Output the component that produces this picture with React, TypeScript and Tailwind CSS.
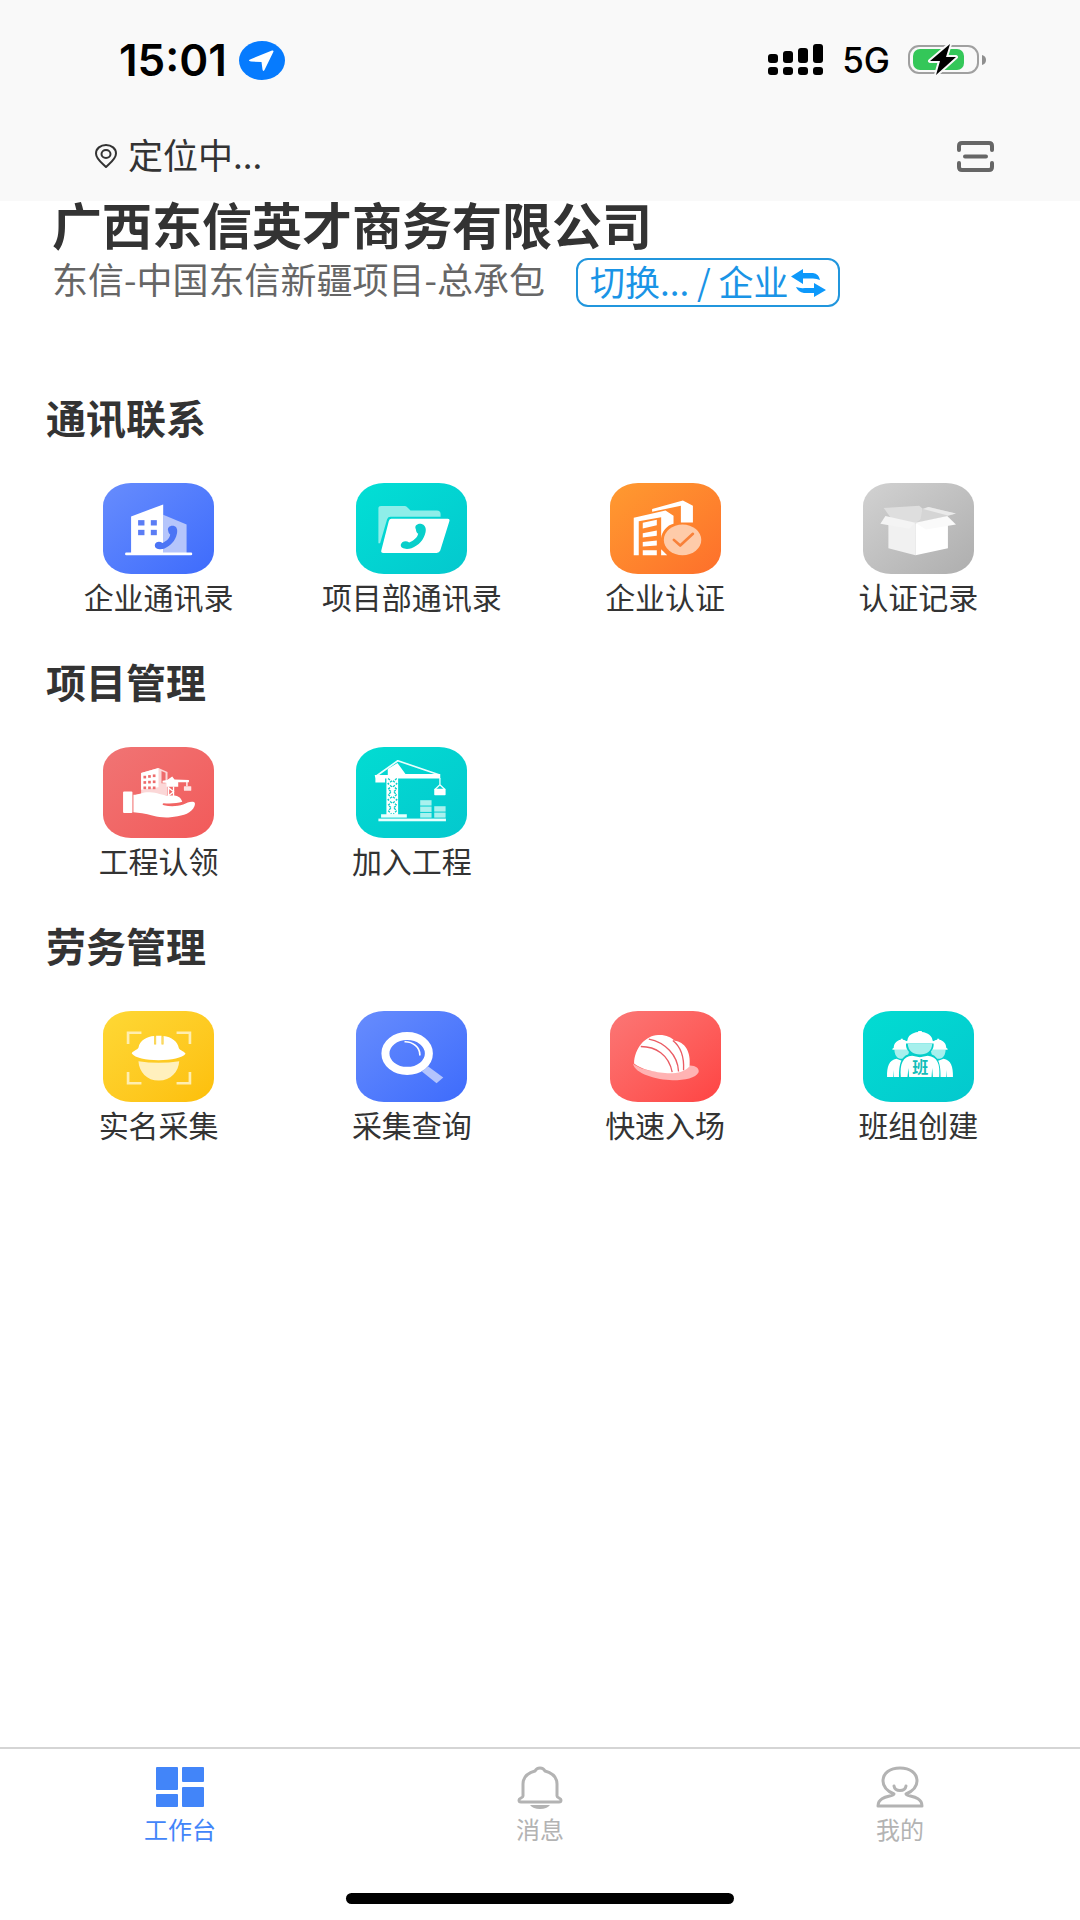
import React from 'react';

interface MenuItem {
  label: string;
  tile: string;
  icon: React.ReactNode;
}

interface MenuSection {
  title: string;
  items: MenuItem[];
}

interface TabItem {
  label: string;
  active?: boolean;
  icon: React.ReactNode;
}

const TileSvg: React.FC<{ children: React.ReactNode }> = ({ children }) => (
  <svg viewBox="0 0 332 272" preserveAspectRatio="none" className="h-full w-full" aria-hidden="true">
    {children}
  </svg>
);

const CompanyContactsIcon = () => (
  <TileSvg>
    <path d="M180 95 L250 124 V210 H180 Z" fill="#b5c5fb" />
    <path d="M84 100 L180 64 V210 H84 Z" fill="#fff" />
    <g fill="#5b7df5">
      <rect x="105" y="111" width="19" height="16" />
      <rect x="143" y="111" width="18" height="16" />
      <rect x="105" y="140" width="19" height="16" />
      <rect x="143" y="140" width="18" height="16" />
    </g>
    <rect x="66" y="208" width="201" height="8" rx="4" fill="#fff" />
    <path
      d="M195 143 C191 133 201 126 211 128 C221 130 224 141 221 152 C216 174 202 188 184 196 C170 201 154 197 155 185 C157 175 169 173 178 179 C190 174 200 165 201 154 C197 152 196 148 195 143 Z"
      fill="#4b74f5"
    />
  </TileSvg>
);

const ProjectContactsIcon = () => (
  <TileSvg>
    <path d="M67 76 Q67 69 75 69 H145 Q150 69 154 73 L163 82 H242 Q253 82 253 93 V101 H103 Q96 101 93 108 L72 180 H67 Z" fill="#8eeee9" />
    <path d="M106 107 H274 Q282 107 279 115 L252 202 Q249 209 241 209 H82 Q73 209 76 200 L98 114 Q100 107 106 107 Z" fill="#fff" />
    <path
      d="M179 138 C174 128 183 121 194 122 C206 124 211 135 208 147 C203 170 188 186 166 195 C150 200 132 196 134 184 C137 174 150 171 159 178 C172 173 184 163 186 152 C181 149 180 144 179 138 Z"
      fill="#08cfca"
    />
  </TileSvg>
);

const CertificationIcon = () => (
  <TileSvg>
    <path d="M126 78 L218 52 L248 68 V118 H212 V68 L126 86 Z" fill="#fff" />
    <path d="M71 104 L166 82 L190 98 V122 C171 126 155 145 153 165 V102 L86 114 V216 H71 Z" fill="#fff" />
    <g fill="#fff">
      <path d="M98 119 L140 110 V126 L98 136 Z" />
      <path d="M98 150 L140 142 V158 L98 163 Z" />
      <path d="M98 176 L140 172 V187 L98 190 Z" />
      <path d="M98 201 H140 V216 H98 Z" />
      <path d="M153 198 L171 216 H153 Z" />
    </g>
    <ellipse cx="217" cy="170" rx="56" ry="46" fill="#fecba9" />
    <path d="M191 170 L210 187 L248 152" fill="none" stroke="#f8813a" strokeWidth="8" strokeLinecap="round" strokeLinejoin="round" />
  </TileSvg>
);

const RecordsIcon = () => (
  <TileSvg>
    <path d="M62 75 L168 68 L178 76 V107 L157 120 L84 105 Z" fill="#dedede" />
    <path d="M178 76 L196 72 L278 91 L254 99 L157 120 L172 108 Z" fill="#d5d5d5" />
    <path d="M196 72 L278 91 L254 97 L180 78 Z" fill="#eaeaea" />
    <path d="M76 116 L157 120 V216 L76 195 Z" fill="#f1f1f1" />
    <path d="M157 120 L254 116 V195 L157 216 Z" fill="#fff" />
    <path d="M67 99 L157 119 L138 137 L52 122 Z" fill="#f4f4f4" />
    <path d="M157 119 L252 99 L278 124 L188 139 Z" fill="#fafafa" />
  </TileSvg>
);

const ClaimProjectIcon = () => (
  <TileSvg>
    <path d="M114 78 L166 63 L193 75 V145 H114 Z" fill="#fbd7d7" />
    <path d="M114 78 L166 63 V120 L114 128 Z" fill="#fff" />
    <g fill="#ee6b6b">
      <rect x="121" y="86" width="8" height="8" />
      <rect x="135" y="84" width="8" height="8" />
      <rect x="149" y="82" width="8" height="8" />
      <rect x="121" y="102" width="8" height="8" />
      <rect x="135" y="101" width="8" height="8" />
      <rect x="149" y="100" width="8" height="8" />
      <rect x="121" y="118" width="8" height="8" />
      <rect x="135" y="118" width="8" height="8" />
      <rect x="149" y="118" width="8" height="8" />
    </g>
    <path d="M175 72 L187 77 V108 H175 Z" fill="#ee6b6b" />
    <path d="M192 99 L207 88 L214 97 L257 99 V105 H225 V119 H190 V107 H178 V101 Z" fill="#fff" />
    <path d="M196 118 V152 M211 118 V152 M196 122 L211 134 L196 146 M251 104 V117" fill="none" stroke="#fff" strokeWidth="4" />
    <rect x="242" y="117" width="22" height="14" rx="2" fill="#fde3e3" />
    <path
      d="M91 143 C108 142 117 135 138 135 C161 134 176 146 202 145 C222 144 233 149 237 164 C222 169 199 169 181 168 C177 169 177 173 182 174 C203 179 223 177 240 172 C251 167 259 163 269 164 C278 165 276 175 270 184 C257 202 232 207 202 210 C169 214 140 201 117 198 L91 195 Z"
      fill="#fff"
    />
    <rect x="60" y="133" width="28" height="64" rx="3" fill="#fff" />
  </TileSvg>
);

const JoinProjectIcon = () => (
  <TileSvg>
    <path d="M62 86 L125 41 L248 83" fill="none" stroke="#e8fffe" strokeWidth="5" strokeLinejoin="round" />
    <path d="M124 48 L148 81 H252 V94 H87 V106 H58 V94 L56 84 H95 V66 Z" fill="#fff" />
    <rect x="91" y="90" width="35" height="116" fill="#fff" />
    <path d="M96 94 L106 102 L96 110 L106 118 L96 126 L106 134 L96 142 L106 150 L96 158 L106 166 L96 174 L106 182 L96 190 L106 200" fill="none" stroke="#0ccfc9" strokeWidth="4" strokeDasharray="7 4" />
    <path d="M122 94 L112 102 L122 110 L112 118 L122 126 L112 134 L122 142 L112 150 L122 158 L112 166 L122 174 L112 182 L122 190 L112 200" fill="none" stroke="#0ccfc9" strokeWidth="4" strokeDasharray="7 4" />
    <rect x="75" y="201" width="77" height="10" fill="#e8fffe" />
    <rect x="67" y="214" width="202" height="8" fill="#e8fffe" />
    <path d="M251 93 V113 L236 127 M251 113 L266 127" fill="none" stroke="#e8fffe" strokeWidth="4" />
    <rect x="234" y="125" width="34" height="19" rx="2" fill="#fff" />
    <g fill="#a9f1ee">
      <rect x="192" y="159" width="34" height="16" />
      <rect x="192" y="178" width="34" height="16" />
      <rect x="192" y="197" width="34" height="14" />
      <rect x="234" y="177" width="34" height="16" />
      <rect x="234" y="196" width="34" height="15" />
    </g>
  </TileSvg>
);

const RealNameIcon = () => (
  <TileSvg>
    <path
      d="M115 65 H75 V99 M220 65 H260 V99 M75 182 V216 H115 M260 182 V216 H220"
      fill="none"
      stroke="#ffeeb0"
      strokeWidth="8"
    />
    <path d="M106 150 Q166 160 228 150 C226 181 203 208 167 208 C131 208 108 182 106 150 Z" fill="#fff0bd" />
    <path d="M86 127 C88 120 103 116 106 110 C110 88 132 76 153 75 V100 H159 V74 H175 V100 H181 V75 C205 78 223 91 227 111 C230 118 244 120 247 128 C238 140 205 147 166 147 C128 147 96 140 86 127 Z" fill="#fff" />
    <path d="M156 76 V98 M178 76 V98" stroke="#f8d96a" strokeWidth="4" />
  </TileSvg>
);

const SearchRecordsIcon = () => (
  <TileSvg>
    <path d="M197 181 L216 166 L261 199 L241 216 Z" fill="#b3c4fd" />
    <ellipse cx="153" cy="127" rx="65" ry="52" fill="none" stroke="#fff" strokeWidth="24" />
    <path d="M147 92 C170 92 191 108 191 131" fill="none" stroke="#fff" strokeWidth="5" strokeLinecap="round" />
  </TileSvg>
);

const QuickEntryIcon = () => (
  <TileSvg>
    <path d="M69 158 C105 186 180 190 239 163 C257 163 268 173 265 183 C256 200 226 207 187 207 C140 207 73 187 69 158 Z" fill="#ffb3b3" />
    <path d="M72 157 C73 113 104 74 144 72 C168 71 183 79 193 89 C223 92 243 121 238 165 C225 181 199 187 172 186 C134 184 92 174 72 157 Z" fill="#fff" />
    <path
      d="M92 106 C136 106 176 130 186 183 M116 84 C164 93 203 132 205 181 M188 88 C212 107 222 140 220 177"
      fill="none"
      stroke="#ea5c64"
      strokeWidth="4"
    />
  </TileSvg>
);

const TeamIcon = () => (
  <TileSvg>
    <g id="side-worker">
      <path d="M94 115 H138 C138 132 130 143 116 143 C102 143 94 132 94 115 Z" fill="#a7f0ed" />
      <path d="M88 113 L92 110 C92 97 101 88 113 86 V83 H119 V86 C132 88 140 98 140 110 L144 113 V116 H88 Z" fill="#fff" />
      <path d="M72 197 C71 168 78 146 100 143 L116 149 L130 144 V197 H92 V176 L90 197 Z" fill="#fff" />
    </g>
    <use href="#side-worker" transform="translate(341 0) scale(-1 1)" />
    <path d="M108 201 C107 159 114 130 146 128 C132 120 127 108 129 94 H211 C213 108 208 120 194 128 C226 130 233 159 232 201 Z" fill="#05cec9" />
    <path d="M134 98 H207 C206 119 192 130 171 130 C149 130 135 119 134 98 Z" fill="#a7f0ed" />
    <path d="M127 92 L133 88 C134 74 147 65 165 63 V60 H176 V63 C194 65 207 75 208 88 L214 92 V97 H127 Z" fill="#fff" />
    <path d="M113 197 C110 158 119 136 147 134 L170 138 L194 134 C223 137 231 159 228 197 H209 L207 170 L205 197 H138 L136 170 L133 197 Z" fill="#fff" />
    <text
      x="171"
      y="184"
      textAnchor="middle"
      fontSize="48"
      fontWeight="700"
      fill="#13bdb9"
      className="font-['Noto_Sans_CJK_SC',sans-serif]"
    >
      班
    </text>
  </TileSvg>
);

const WorkbenchIcon = () => (
  <svg viewBox="0 0 48 40" className="h-10 w-12" fill="currentColor" aria-hidden="true">
    <rect x="0" y="0" width="22" height="23" rx="1" />
    <rect x="26" y="0" width="22" height="15" rx="1" />
    <rect x="0" y="27" width="22" height="13" rx="1" />
    <rect x="26" y="20" width="22" height="20" rx="1" />
  </svg>
);

const BellIcon = () => (
  <svg viewBox="0 0 48 43" className="h-[43px] w-12" fill="none" stroke="currentColor" strokeWidth="3" aria-hidden="true">
    <path d="M7 30 V18 C7 11 12 7 19 5 C21 1 27 1 29 5 C36 7 41 11 41 18 V30 C41 32 45 32 45 34 Q45 36 43 36 H5 Q3 36 3 34 C3 32 7 32 7 30 Z" strokeLinejoin="round" />
    <path d="M14 39 H34 Q31 43 24 43 Q17 43 14 39 Z" fill="currentColor" stroke="none" />
  </svg>
);

const UserIcon = () => (
  <svg viewBox="0 0 48 42" className="h-[42px] w-12" fill="none" stroke="currentColor" strokeWidth="3" aria-hidden="true">
    <path d="M18 28 C11 25 7 21 7 15 C7 7 14 2 24 2 C34 2 41 7 41 15 C41 21 37 25 30 28 C30 31 46 29 46 40 H2 C2 29 18 31 18 28 Z" strokeLinejoin="round" />
    <path d="M18 20 C19 26 29 26 30 20" strokeLinecap="round" />
  </svg>
);

const sections: MenuSection[] = [
  {
    title: '通讯联系',
    items: [
      { label: '企业通讯录', tile: 'from-[#678cfd] to-[#3e6bfc]', icon: <CompanyContactsIcon /> },
      { label: '项目部通讯录', tile: 'from-[#02dfd5] to-[#04c8ce]', icon: <ProjectContactsIcon /> },
      { label: '企业认证', tile: 'from-[#ff9a30] to-[#fd6f2b]', icon: <CertificationIcon /> },
      { label: '认证记录', tile: 'from-[#d2d2d2] to-[#aeaeae]', icon: <RecordsIcon /> },
    ],
  },
  {
    title: '项目管理',
    items: [
      { label: '工程认领', tile: 'from-[#f07474] to-[#f25a5a]', icon: <ClaimProjectIcon /> },
      { label: '加入工程', tile: 'from-[#02dcd2] to-[#04c8ce]', icon: <JoinProjectIcon /> },
    ],
  },
  {
    title: '劳务管理',
    items: [
      { label: '实名采集', tile: 'from-[#fed834] to-[#fdbf08]', icon: <RealNameIcon /> },
      { label: '采集查询', tile: 'from-[#678cfd] to-[#3e6bfc]', icon: <SearchRecordsIcon /> },
      { label: '快速入场', tile: 'from-[#fb7675] to-[#fe4343]', icon: <QuickEntryIcon /> },
      { label: '班组创建', tile: 'from-[#02dcd2] to-[#04c8ce]', icon: <TeamIcon /> },
    ],
  },
];

const tabs: TabItem[] = [
  { label: '工作台', active: true, icon: <WorkbenchIcon /> },
  { label: '消息', icon: <BellIcon /> },
  { label: '我的', icon: <UserIcon /> },
];

const StatusBar = () => (
  <div className="flex h-[120px] items-center justify-between pr-[94px] pl-[119px] font-['Inter','Liberation_Sans',sans-serif] text-black">
    <div className="flex items-center gap-3">
      <span className="text-[44px] leading-[48px] font-semibold">15:01</span>
      <svg viewBox="0 0 46 39" className="h-[39px] w-[46px]" aria-hidden="true">
        <ellipse cx="23" cy="19.5" rx="23" ry="19.5" fill="#067bfe" />
        <path d="M11 18.5 L33 9.5 Q35 9 34.3 11 L25.5 29 Q24 31 23.5 28.5 L22.5 21 L12 20.5 Q8.5 20 11 18.5 Z" fill="#fff" />
      </svg>
    </div>
    <div className="flex items-center gap-[18px]">
      <svg viewBox="0 0 56 32" className="h-8 w-14" aria-hidden="true">
        <rect x="0" y="10" width="10" height="9" rx="3" />
        <rect x="15" y="7" width="10" height="12" rx="3" />
        <rect x="30" y="4" width="10" height="15" rx="3" />
        <rect x="45" y="0" width="10" height="19" rx="3" />
        <rect x="0" y="23" width="10" height="8" rx="3" />
        <rect x="15" y="23" width="10" height="8" rx="3" />
        <rect x="30" y="23" width="10" height="8" rx="3" />
        <rect x="45" y="23" width="10" height="8" rx="3" />
      </svg>
      <span className="text-[35px] leading-10 font-medium">5G</span>
      <svg viewBox="0 0 78 32" className="h-8 w-[78px]" aria-hidden="true">
        <rect x="1" y="2" width="69" height="27" rx="10" fill="none" stroke="#a0a0a0" strokeWidth="2" />
        <rect x="5" y="5" width="51" height="21" rx="7" fill="#34c759" />
        <path d="M74 11 Q78 12 78 16 Q78 20 74 21 Z" fill="#8f8f8f" />
        <path d="M42 0 L22 17 H32 L28 31 L48 13 H38 Z" fill="#000" stroke="#f9f9f9" strokeWidth="4" strokeLinejoin="round" paintOrder="stroke" />
      </svg>
    </div>
  </div>
);

const LocationBar = () => (
  <div className="flex h-[72px] items-center justify-between pr-[86px] pl-[95px]">
    <div className="flex items-center gap-[11px] text-[#333]">
      <svg viewBox="0 0 22 24" className="h-6 w-[22px]" fill="none" stroke="currentColor" strokeWidth="2" aria-hidden="true">
        <path d="M11 23 C7 19 1 15 1 9.5 C1 4.5 5.5 1 11 1 C16.5 1 21 4.5 21 9.5 C21 15 15 19 11 23 Z" />
        <ellipse cx="11" cy="10" rx="4.5" ry="4" />
      </svg>
      <span className="pb-1 text-[35px] leading-[44px]">定位中...</span>
    </div>
    <button type="button" aria-label="扫一扫" className="text-[#666]">
      <svg viewBox="0 0 37 31" className="h-[31px] w-[37px]" fill="none" stroke="currentColor" strokeWidth="4" strokeLinecap="round" aria-hidden="true">
        <path d="M2 9 V5 Q2 2 5 2 H32 Q35 2 35 5 V9" />
        <path d="M2 22 V26 Q2 29 5 29 H32 Q35 29 35 26 V22" />
        <path d="M8 15.5 H29" />
      </svg>
    </button>
  </div>
);

const App: React.FC = () => {
  return (
    <div className="flex min-h-screen flex-col bg-white font-['Noto_Sans_CJK_SC',sans-serif] text-[#333]">
      <header className="bg-[#f9f9f9] pb-[9px]">
        <StatusBar />
        <LocationBar />
      </header>

      <main className="flex-1">
        {/* Company */}
        <div className="px-[52px]">
          <h1 className="text-[50px] leading-[44px] font-bold">广西东信英才商务有限公司</h1>
          <div className="mt-[13px] flex items-start gap-[31px]">
            <p className="text-[36px] leading-[40px] text-[#666]">东信-中国东信新疆项目-总承包</p>
            <button
              type="button"
              className="flex h-[49px] items-center gap-0.5 rounded-xl border-2 border-[#2196dd] px-3 text-[#1a94e6]"
            >
              <span className="pb-1 text-[35px] leading-[40px]">切换... / 企业</span>
              <svg viewBox="0 0 35 28" className="h-7 w-[35px]" fill="#0d99fb" aria-hidden="true">
                <path d="M0 7.5 L12 0 V4 H22 Q28 5 29 11 Q25 9 20 9.5 H12 V15 Z" />
                <path d="M35 21 L23 28 V24 H13 Q7 23 5 18 Q9 19.5 14 19 H23 V14 Z" />
              </svg>
            </button>
          </div>
        </div>

        {/* Menu sections */}
        <div className="mt-[86px] flex flex-col gap-[41px]">
          {sections.map((section) => (
            <section key={section.title}>
              <h2 className="pl-[46px] text-[40px] leading-[48px] font-bold">{section.title}</h2>
              <div className="mt-[42px] grid grid-cols-4 pr-[35px] pl-[32px]">
                {section.items.map((item) => (
                  <button key={item.label} type="button" className="flex flex-col items-center gap-0.5">
                    <span className={`block h-[91px] w-[111px] overflow-hidden rounded-[28px/23px] bg-linear-to-br ${item.tile}`}>
                      {item.icon}
                    </span>
                    <span className="text-[30px] leading-[40px] whitespace-nowrap">{item.label}</span>
                  </button>
                ))}
              </div>
            </section>
          ))}
        </div>
      </main>

      <footer className="border-t-2 border-[#d5d5d5] bg-white pb-4">
        <nav className="grid grid-cols-3 pt-4">
          {tabs.map((tab) => (
            <button
              key={tab.label}
              type="button"
              className={`flex flex-col items-center gap-1 ${tab.active ? 'text-[#4285f9]' : 'text-[#b3b3b3]'}`}
            >
              <span className="flex h-11 items-center">{tab.icon}</span>
              <span className="text-[24px] leading-[32px]">{tab.label}</span>
            </button>
          ))}
        </nav>
        <div className="mx-auto mt-12 h-[11px] w-[36%] rounded-full bg-black" />
      </footer>
    </div>
  );
};

export default App;
